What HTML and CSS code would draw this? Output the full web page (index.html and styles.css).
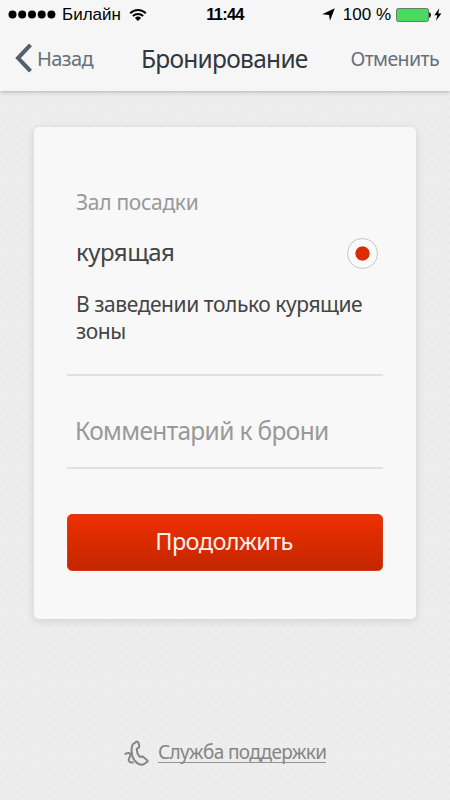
FILE: index.html
```html
<!DOCTYPE html>
<html lang="ru">
<head>
<meta charset="utf-8">
<meta name="viewport" content="width=device-width">
<title>Бронирование</title>
<link rel="stylesheet" href="styles.css">
</head>
<body>
<header class="top">
  <div class="status">
    <div class="carrier">
      <svg class="signal" width="48" height="9" viewBox="0 0 48 9"><circle cx="4.5" cy="4.5" r="4"/><circle cx="14.2" cy="4.5" r="4"/><circle cx="24" cy="4.5" r="4"/><circle cx="33.7" cy="4.5" r="4"/><circle cx="43.4" cy="4.5" r="4"/></svg>
      <span class="operator">Билайн</span>
      <svg class="wifi" width="18" height="14" viewBox="0 0 18 14"><path d="M1.2 5.2a11 11 0 0 1 15.6 0M3.9 8a7.2 7.2 0 0 1 10.2 0" fill="none" stroke="#000" stroke-width="2"/><path d="M9 13 5.9 9.9a4.4 4.4 0 0 1 6.2 0z"/></svg>
    </div>
    <time class="clock">11:44</time>
    <div class="power">
      <svg width="13" height="13" viewBox="0 0 13 13"><path d="M12.8.2 8 12.8 7 7 .2 6.2z"/></svg>
      <span class="percent">100 %</span>
      <svg class="battery" width="36" height="14" viewBox="0 0 36 14"><rect x=".5" y=".5" width="32" height="13" rx="1.8" fill="#4cd95f" stroke="#637d67"/><path d="M33.2 4.5h1q1.6 2.5 0 5h-1z"/></svg>
      <svg class="bolt" width="8" height="13" viewBox="0 0 8 13"><path d="M5.2.3.4 7.3h2.9L2 12.7 7.4 5.4H4.3z"/></svg>
    </div>
  </div>
  <nav class="nav">
    <a class="back"><svg width="17" height="30" viewBox="0 0 17 30"><path d="M15.5 1.8 3 15l12.5 13.2" fill="none" stroke="#53606b" stroke-width="4"/></svg><span>Назад</span></a>
    <h1 class="title">Бронирование</h1>
    <a class="cancel">Отменить</a>
  </nav>
</header>
<main class="page">
  <section class="card">
    <h2 class="label">Зал посадки</h2>
    <div class="option"><span class="choice">курящая</span><span class="radio"></span></div>
    <p class="note">В заведении только курящие<br>зоны</p>
    <div class="comment">Комментарий к брони</div>
    <button class="submit">Продолжить</button>
  </section>
  <footer class="support">
    <svg width="26" height="27" viewBox="0 0 26 27" fill="none" stroke="#858585" stroke-width="2" stroke-linecap="round" stroke-linejoin="round"><path d="M1.3 14.8q3.8-1.6 5 .2c1 2-2.6 4.6-1.4 7q1.2 2 4.3 1.4"/><path d="M9.2 5 12.6 2.6q1.2-.2 1.7.9l1 3.3q.2 1.2-.7 1.9l-1.8 1.2q-.2 4.2 2.8 7.9l2.2-.4q1.1 0 1.8.8l3.6 3.1q.8.9-.1 1.7L19 25.6q-4.6.9-8.6-4.4Q6.6 15.8 7.9 7.8 8.2 5.8 9.2 5z"/></svg>
    <a class="help">Служба поддержки</a>
  </footer>
</main>
</body>
</html>
```
FILE: styles.css
```css
* { box-sizing: border-box; }
body {
  margin: 0;
  width: 450px;
  height: 800px;
  overflow: hidden;
  display: flex;
  flex-direction: column;
  font-family: "Noto Sans", "Open Sans", sans-serif;
  background-color: #ededed;
  background-image: radial-gradient(circle, #e6e6e6 0.8px, transparent 1.4px), radial-gradient(circle, #e6e6e6 0.8px, transparent 1.4px);
  background-size: 9px 9px;
  background-position: 0 0, 4.5px 4.5px;
}
.top {
  height: 91px;
  flex: none;
  background: #f6f6f6;
  box-shadow: 0 1px 4px rgba(0, 0, 0, .25);
}
.status {
  height: 29px;
  padding: 0 8px;
  display: grid;
  grid-template-columns: 1fr auto 1fr;
  align-items: center;
  font: 17px/29px "Liberation Sans", Arial, sans-serif;
  color: #000;
}
.carrier, .power { display: flex; align-items: center; }
.power { justify-content: flex-end; }
.operator { margin: 0 8px 0 6px; }
.clock { font-size: 16.5px; font-weight: bold; letter-spacing: -.8px; }
.percent { margin: 0 5px 0 8px; }
.bolt { margin-left: 2px; }
.nav {
  height: 62px;
  padding: 0 11px 4px 15px;
  display: grid;
  grid-template-columns: 126px 1fr auto;
  align-items: center;
  color: #66707a;
  font-size: 20px;
}
.back { display: flex; align-items: center; gap: 5px; letter-spacing: -.6px; }
.title { margin: 0; font-size: 24.5px; font-weight: 400; letter-spacing: -.73px; color: #32373c; }
.cancel { font-size: 19.5px; letter-spacing: -.6px; }
.page { flex: 1; padding: 36px 34px 0; }
.card {
  width: 382px;
  height: 492px;
  padding: 60px 33px 0;
  border-radius: 5px;
  background: #f8f8f8;
  box-shadow: 0 2px 8px rgba(0, 0, 0, .12);
}
.label { margin: 0 0 0 9px; font-size: 21px; line-height: 30px; font-weight: 400; letter-spacing: -.3px; color: #999; }
.option {
  height: 71px;
  padding: 1px 5px 0 9px;
  display: flex;
  align-items: center;
  justify-content: space-between;
}
.choice { padding-bottom: 3px; font-size: 24px; letter-spacing: -.5px; color: #444; }
.radio {
  width: 31px;
  height: 31px;
  margin-top: 1px;
  border: 1px solid #c4c8c8;
  border-radius: 50%;
  background: radial-gradient(circle, #dd2b05 6.7px, #fbfbfb 7.5px);
}
.note {
  height: 88px;
  margin: 0;
  padding: 3px 0 0 9px;
  border-bottom: 2px solid #e1e1e1;
  font-size: 21px;
  line-height: 27px;
  letter-spacing: -.43px;
  color: #444;
  white-space: nowrap;
}
.comment {
  height: 93px;
  padding: 38px 0 0 8px;
  border-bottom: 2px solid #e1e1e1;
  font-size: 24.5px;
  line-height: 34px;
  letter-spacing: -.65px;
  color: #999;
  white-space: nowrap;
}
.submit {
  display: block;
  width: 316px;
  height: 57px;
  margin: 45px 0 0;
  padding: 0 2px 4px 0;
  border: 1px solid #d43b16;
  border-radius: 5px;
  background: linear-gradient(#ee3000, #c42600);
  font: 23.5px "Noto Sans", sans-serif;
  letter-spacing: -.6px;
  color: #fff0e8;
}
.support {
  margin-top: 120px;
  padding-left: 90px;
  display: flex;
  align-items: flex-start;
  gap: 8px;
}
.help {
  height: 24px;
  border-bottom: 1px solid #929292;
  font-size: 19px;
  line-height: 26px;
  letter-spacing: -.62px;
  color: #858585;
  white-space: nowrap;
}
```
